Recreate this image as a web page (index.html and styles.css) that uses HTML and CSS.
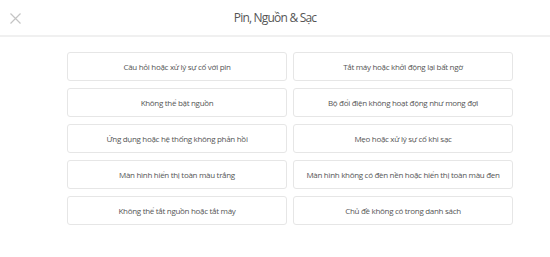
FILE: index.html
```html
<!DOCTYPE html>
<html lang="vi">
<head>
<meta charset="utf-8">
<link rel="stylesheet" href="styles.css">
</head>
<body>
<div class="modal">
  <header class="head">
    <button class="close" aria-label="Đóng">
      <svg width="11" height="11" viewBox="0 0 11 11"><path d="M0.5 0.5L10.5 10.5M10.5 0.5L0.5 10.5" stroke="#c4c4c4" stroke-width="1.2" fill="none"/></svg>
    </button>
    <h1 class="title">Pin, Nguồn &amp; Sạc</h1>
  </header>
  <div class="grid">
    <a class="card">Câu hỏi hoặc xử lý sự cố với pin</a>
    <a class="card">Tắt máy hoặc khởi động lại bất ngờ</a>
    <a class="card">Không thể bật nguồn</a>
    <a class="card">Bộ đổi điện không hoạt động như mong đợi</a>
    <a class="card">Ứng dụng hoặc hệ thống không phản hồi</a>
    <a class="card">Mẹo hoặc xử lý sự cố khi sạc</a>
    <a class="card">Màn hình hiển thị toàn màu trắng</a>
    <a class="card">Màn hình không có đèn nền hoặc hiển thị toàn màu đen</a>
    <a class="card">Không thể tắt nguồn hoặc tắt máy</a>
    <a class="card">Chủ đề không có trong danh sách</a>
  </div>
</div>
</body>
</html>
```
FILE: styles.css
```css
html, body { margin: 0; padding: 0; background: #fff; }
body { font-family: "Open Sans", "Noto Sans", sans-serif; color: #555; width: 550px; height: 257px; overflow: hidden; }
.head { position: relative; height: 35px; border-bottom: 2px solid #f0f0f0; display: flex; align-items: center; justify-content: center; }
.close { position: absolute; left: 10px; top: 13px; padding: 0; margin: 0; border: 0; background: none; width: 11px; height: 11px; display: block; }
.close svg { display: block; }
.title { margin: 0; font-size: 12px; letter-spacing: -0.8px; font-weight: 400; color: #555; line-height: 1; }
.grid { display: grid; grid-template-columns: 220px 220px; column-gap: 6px; row-gap: 7px; padding: 15px 0 0 67px; }
.card { display: flex; align-items: center; justify-content: center; height: 27px; border: 1px solid #e6e6e6; border-radius: 3px; font-size: 8px; letter-spacing: -0.3px; color: #555; text-decoration: none; white-space: nowrap; }
```
